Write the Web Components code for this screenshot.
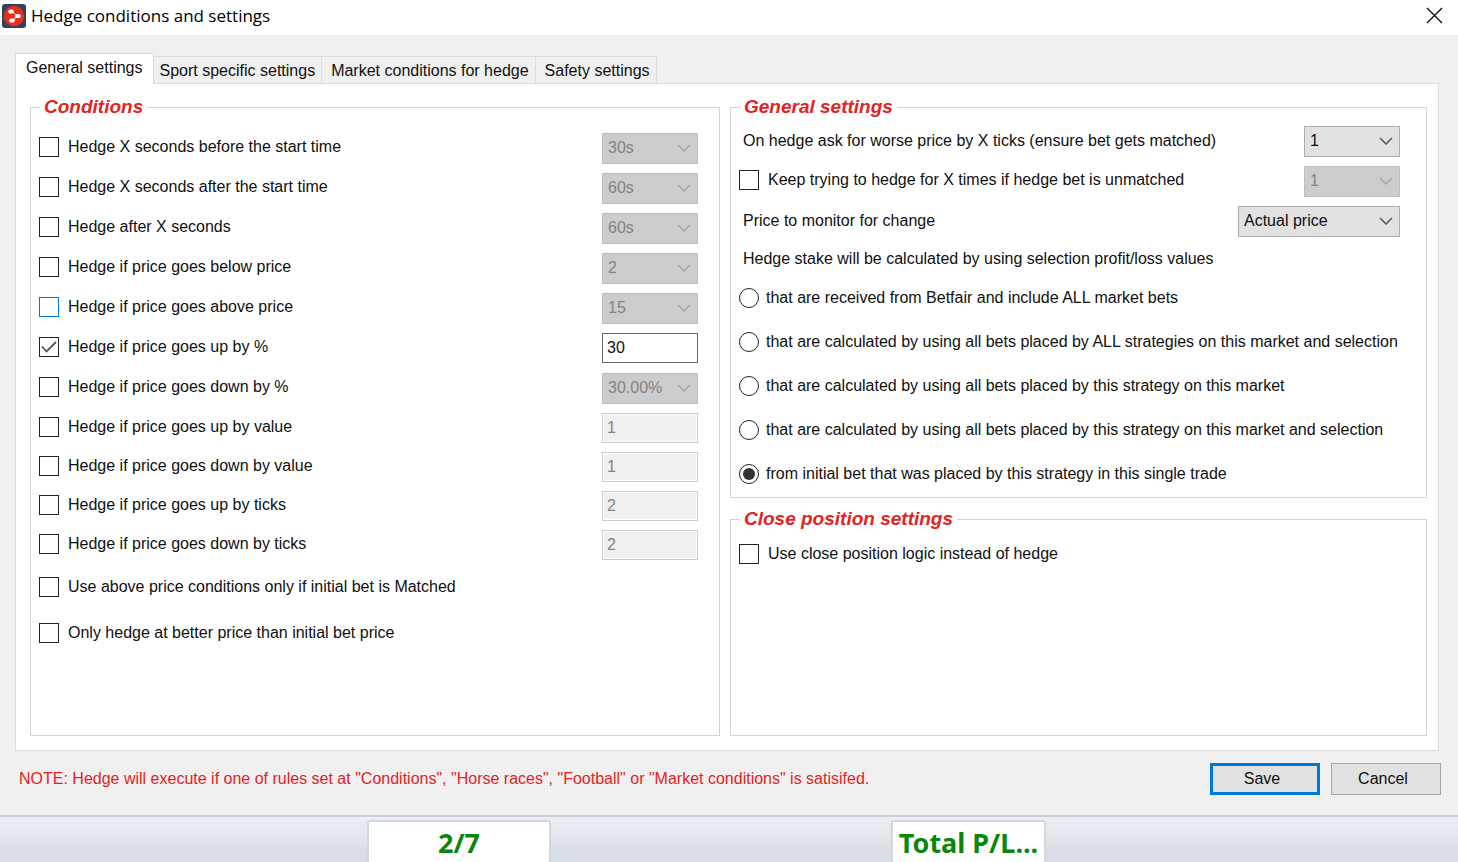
<!DOCTYPE html>
<html lang="en">
<head>
<meta charset="utf-8">
<meta name="viewport" content="width=device-width, initial-scale=1">
<title>Hedge conditions and settings</title>
<style>
	body {
		margin: 0;
		font: 16px/20px "Liberation Sans", Arial, sans-serif;
		color: #101010;
		background: #f0f0f0;
	}
</style>
</head>
<body>
<hedge-dialog></hedge-dialog>

<script>
// Registers an element whose shadow root is filled by render()
function define(name, render) {
	customElements.define(name, class extends HTMLElement {
		constructor() {
			super();
			this.attachShadow({ mode: 'open' });
		}

		connectedCallback() {
			this.shadowRoot.innerHTML = `<style>* { box-sizing: border-box; }</style>` + render(this);
		}
	});
}

define('title-bar', el => `
	<style>
		:host {
			box-sizing: border-box;
			display: flex;
			align-items: center;
			gap: 5px;
			height: 35px;
			padding: 0 8px 4px 2px;
			background: #fff;
			color: #000;
		}

		.logo {
			width: 24px;
			height: 24px;
		}

		h1 {
			flex: 1;
			margin: 0;
			font: 17px/24px "Open Sans", "Noto Sans", sans-serif;
		}

		button {
			display: flex;
			padding: 7px;
			border: 0;
			background: none;
		}
	</style>
	<svg class="logo" viewBox="0 0 24 24">
		<rect width="24" height="24" rx="3" fill="#2f4459"/>
		<circle cx="12" cy="12" r="10.3" fill="#e2301c"/>
		<path d="M9 7.500 L16 12 L10 16.500" fill="none" stroke="#f3a89c" stroke-width="1.2"/>
		<ellipse cx="9" cy="7.500" rx="2.800" ry="2" fill="#fff"/>
		<ellipse cx="16" cy="12" rx="2.800" ry="2" fill="#fff"/>
		<ellipse cx="10" cy="16.500" rx="2.800" ry="2" fill="#fff"/>
	</svg>
	<h1><slot></slot></h1>
	<button type="button" aria-label="Close">
		<svg width="17" height="17" viewBox="0 0 17 17" stroke="#000" stroke-width="1.2"><path d="M1 1 L16 16 M16 1 L1 16"/></svg>
	</button>
`);

define('tab-strip', el => `
	<style>
		:host {
			display: flex;
		}

		div {
			display: flex;
			align-items: flex-end;
		}

		button {
			height: 27px;
			padding: 1px 6px 0;
			font: inherit;
			color: inherit;
			border: 1px solid #dcdcdc;
			border-left: 0;
			border-bottom: 0;
			background: #f0f0f0;
		}

		button:nth-child(n + 3) {
			padding-left: 9px;
		}

		/* the open tab covers the top border of the page below it */
		button[aria-selected="true"] {
			height: 31px;
			margin-bottom: -1px;
			padding: 0 10px 2px;
			border-left: 1px solid #dcdcdc;
			background: #fff;
			z-index: 1;
		}
	</style>
	<div role="tablist">
		${el.getAttribute('tabs').split(',').map((tab, i) => `<button type="button" role="tab" aria-selected="${i === 0}">${tab}</button>`).join('')}
	</div>
`);

define('settings-group', el => `
	<style>
		:host {
			display: flex;
		}

		fieldset {
			flex: 1;
			min-width: 0;
			margin: 0;
			padding: 3px 26px 0 8px;
			border: 1px solid #d4d4d4;
		}

		legend {
			margin-left: 1px;
			padding: 0 4px;
			font: italic bold 19px/22px "Liberation Sans", Arial, sans-serif;
			color: #e2231f;
		}

		:host([wide]) fieldset {
			padding: 10px 21px 0 8px;
		}
	</style>
	<fieldset>
		<legend>${el.getAttribute('legend')}</legend>
		<slot></slot>
	</fieldset>
`);

const toggleStyle = `
	label {
		display: flex;
		align-items: center;
		gap: 9px;
	}

	input[type="checkbox"], input[type="radio"] {
		appearance: none;
		flex: none;
		display: grid;
		place-items: center;
		width: 20px;
		height: 20px;
		margin: 0;
		border: 1px solid #222;
		background: #fff;
	}
`;

// A line with a text or a tick box at the left and a field in the slot
define('setting-row', el => {
	const text = el.getAttribute('text');
	return `
		<style>
			${toggleStyle}

			:host {
				display: flex;
				align-items: center;
				justify-content: space-between;
				height: 40px;
			}

			:host([size="small"]) { height: 39px; }
			:host([size="medium"]) { height: 44px; }
			:host([size="large"]) { height: 48px; }
			:host([size="note"]) { height: 36px; }

			label {
				padding-bottom: 2px;
			}

			span {
				padding-left: 4px;
			}

			.box {
				display: grid;
			}

			.box > * {
				grid-area: 1 / 1;
			}

			svg {
				display: none;
				pointer-events: none;
			}

			input:checked + svg {
				display: block;
			}

			:host([hot]) input {
				border-color: #0078d7;
			}
		</style>
		${el.hasAttribute('check') ? `
			<label>
				<div class="box">
					<input type="checkbox" ${el.hasAttribute('checked') ? 'checked' : ''}>
					<svg width="20" height="20" viewBox="0 0 20 20" fill="none" stroke="#555" stroke-width="1.800"><path d="M3 9.500 L7.500 14.500 L17 5"/></svg>
				</div>
				${text}
			</label>` : `<span>${text}</span>`}
		<slot></slot>
	`;
});

define('select-field', el => `
	<style>
		:host {
			display: grid;
			width: 96px;
			color: #101010;
		}

		:host([wide]) { width: 162px; }

		select, svg {
			grid-area: 1 / 1;
		}

		select {
			appearance: none;
			width: 100%;
			height: 31px;
			padding: 0 24px 0 5px;
			font: inherit;
			color: inherit;
			border: 1px solid #adadad;
			border-radius: 0;
			background: #e1e1e1;
			opacity: 1;
		}

		select:disabled {
			color: #838383;
			border-color: #bfbfbf;
			background: #ccc;
		}

		svg {
			place-self: center end;
			margin-right: 7px;
			pointer-events: none;
			stroke: #555;
		}

		select:disabled + svg {
			stroke: #a6a6a6;
		}
	</style>
	<select aria-label="${el.getAttribute('label')}" ${el.hasAttribute('disabled') ? 'disabled' : ''}>
		<option>${el.getAttribute('value')}</option>
	</select>
	<svg width="14" height="9" viewBox="0 0 14 9" fill="none" stroke-width="1.500"><path d="M1 1 L7 7 L13 1"/></svg>
`);

define('text-field', el => `
	<style>
		:host {
			display: block;
			width: 96px;
		}

		input {
			display: block;
			width: 100%;
			height: 30px;
			padding: 0 4px;
			font: inherit;
			color: #101010;
			border: 1px solid #6a6a6a;
			background: #fff;
		}

		input:disabled {
			color: #838383;
			border-color: #ccc;
			background: #f0f0f0;
			box-shadow: inset 0 0 0 1px #fff;
		}
	</style>
	<input type="text" aria-label="${el.getAttribute('label')}" value="${el.getAttribute('value')}" ${el.hasAttribute('disabled') ? 'disabled' : ''}>
`);

// All radios sit in one shadow root, otherwise they would not form a group
define('radio-list', el => `
	<style>
		${toggleStyle}

		:host {
			display: block;
		}

		label {
			height: 44px;
			padding-bottom: 2px;
			gap: 7px;
		}

		input[type="radio"] {
			border-radius: 50%;
		}

		input:checked::before {
			content: "";
			width: 12px;
			height: 12px;
			border-radius: 50%;
			background: #333;
		}
	</style>
	${[...el.children].map(item => `<label><input type="radio" name="stake" ${item.hasAttribute('selected') ? 'checked' : ''}>${item.textContent}</label>`).join('')}
`);

define('push-button', el => `
	<style>
		:host {
			display: block;
			width: 110px;
		}

		button {
			width: 100%;
			height: 32px;
			padding: 0 6px 0 0;
			font: inherit;
			color: #101010;
			border: 1px solid #a6a6a6;
			background: #e1e1e1;
		}

		:host([primary]) button {
			border: 3px solid #0078d7;
		}
	</style>
	<button type="button"><slot></slot></button>
`);

define('status-bar', el => `
	<style>
		:host {
			display: grid;
			grid-template-columns: 367fr 184px 340fr 155px 412fr;
			height: 47px;
			padding-top: 3px;
			box-sizing: border-box;
			border-top: 2px solid #c9ced9;
			background: linear-gradient(#ebeff3, #dfe3e9 28px, #d9dde6 32px);
			overflow: hidden;
		}

		output {
			grid-column: 2;
			padding-top: 5px;
			border: 2px solid #d3d7de;
			border-bottom: 0;
			border-radius: 3px 3px 0 0;
			background: #fff;
			font: bold 27px/32px "Noto Sans", "Open Sans", sans-serif;
			color: #0a870a;
			text-align: center;
			white-space: nowrap;
		}

		output + output {
			grid-column: 4;
		}
	</style>
	<output>${el.getAttribute('count')}</output>
	<output>${el.getAttribute('total')}</output>
`);

const conditions = [
	{ text: 'Hedge X seconds before the start time', select: '30s' },
	{ text: 'Hedge X seconds after the start time', select: '60s' },
	{ text: 'Hedge after X seconds', select: '60s' },
	{ text: 'Hedge if price goes below price', select: '2' },
	{ text: 'Hedge if price goes above price', select: '15', attrs: 'hot' },
	{ text: 'Hedge if price goes up by %', input: '30', attrs: 'checked' },
	{ text: 'Hedge if price goes down by %', select: '30.00%' },
	{ text: 'Hedge if price goes up by value', input: '1', attrs: 'size="small"' },
	{ text: 'Hedge if price goes down by value', input: '1', attrs: 'size="small"' },
	{ text: 'Hedge if price goes up by ticks', input: '2', attrs: 'size="small"' },
	{ text: 'Hedge if price goes down by ticks', input: '2', attrs: 'size="small"' },
	{ text: 'Use above price conditions only if initial bet is Matched', attrs: 'size="large"' },
	{ text: 'Only hedge at better price than initial bet price', attrs: 'size="medium"' }
];

function conditionRow({ text, select, input, attrs = '' }) {
	const state = attrs === 'checked' ? '' : 'disabled';
	let field = '';
	if (select) field = `<select-field label="${text}" value="${select}" ${state}></select-field>`;
	if (input) field = `<text-field label="${text}" value="${input}" ${state}></text-field>`;
	return `<setting-row check text="${text}" ${attrs}>${field}</setting-row>`;
}

define('hedge-dialog', el => `
	<style>
		:host {
			display: flex;
			flex-direction: column;
			min-height: 100vh;
		}

		main {
			flex: 1;
			display: flex;
			flex-direction: column;
			padding: 18px 19px 0 15px;
		}

		.page {
			flex: 1;
			display: grid;
			grid-template-columns: 99fr 100fr;
			gap: 10px;
			padding: 12px 11px 14px 14px;
			border: 1px solid #dcdcdc;
			background: #fff;
		}

		.side {
			display: flex;
			flex-direction: column;
			gap: 10px;
		}

		.side settings-group:last-child {
			flex: 1;
		}

		footer {
			display: flex;
			align-items: center;
			gap: 11px;
			height: 64px;
			padding-left: 4px;
			padding-bottom: 8px;
			margin-right: -2px;
		}

		p {
			flex: 1;
			margin: 0;
			color: #e2231f;
		}
	</style>
	<title-bar>Hedge conditions and settings</title-bar>
	<main>
		<tab-strip tabs="General settings,Sport specific settings,Market conditions for hedge,Safety settings"></tab-strip>
		<div class="page">
			<settings-group wide legend="Conditions">
				${conditions.map(conditionRow).join('')}
			</settings-group>
			<div class="side">
				<settings-group legend="General settings">
					<setting-row text="On hedge ask for worse price by X ticks (ensure bet gets matched)">
						<select-field label="Worse price ticks" value="1"></select-field>
					</setting-row>
					<setting-row check text="Keep trying to hedge for X times if hedge bet is unmatched">
						<select-field label="Hedge attempts" value="1" disabled></select-field>
					</setting-row>
					<setting-row text="Price to monitor for change">
						<select-field wide label="Price to monitor for change" value="Actual price"></select-field>
					</setting-row>
					<setting-row size="note" text="Hedge stake will be calculated by using selection profit/loss values"></setting-row>
					<radio-list>
						<span>that are received from Betfair and include ALL market bets</span>
						<span>that are calculated by using all bets placed by ALL strategies on this market and selection</span>
						<span>that are calculated by using all bets placed by this strategy on this market</span>
						<span>that are calculated by using all bets placed by this strategy on this market and selection</span>
						<span selected>from initial bet that was placed by this strategy in this single trade</span>
					</radio-list>
				</settings-group>
				<settings-group legend="Close position settings">
					<setting-row check size="medium" text="Use close position logic instead of hedge"></setting-row>
				</settings-group>
			</div>
		</div>
		<footer>
			<p>NOTE: Hedge will execute if one of rules set at "Conditions", "Horse races", "Football" or "Market conditions" is satisifed.</p>
			<push-button primary>Save</push-button>
			<push-button>Cancel</push-button>
		</footer>
	</main>
	<status-bar count="2/7" total="Total P/L..."></status-bar>
`);
</script>
</body>
</html>
